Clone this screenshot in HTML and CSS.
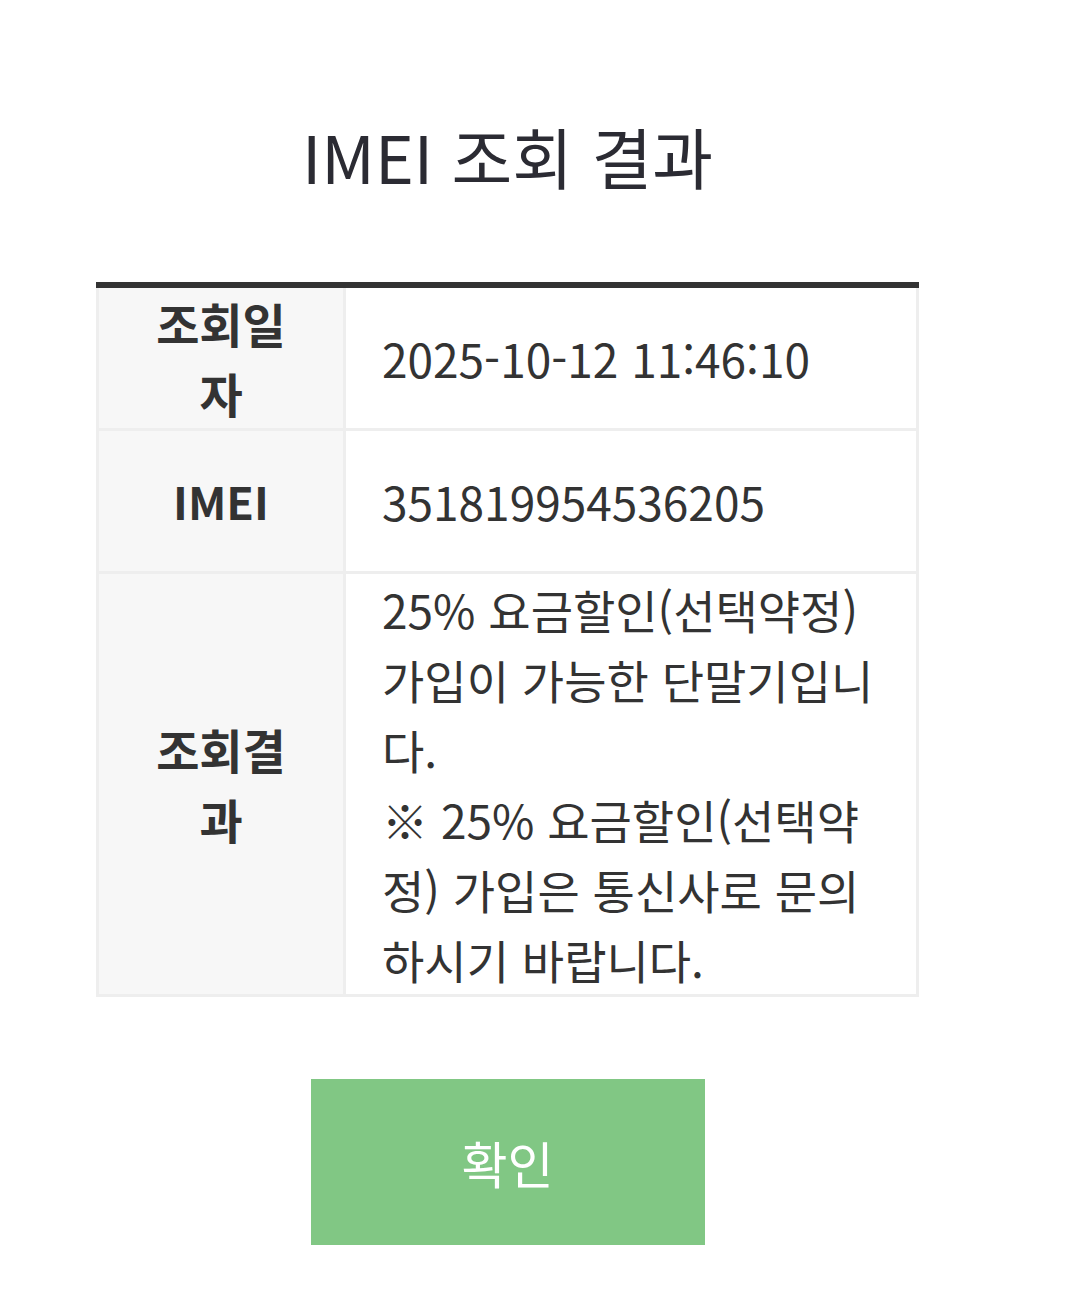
FILE: index.html
```html
<!DOCTYPE html>
<html lang="ko">
<head>
    <meta charset="UTF-8">
    <title>IMEI 조회 결과</title>
    <meta name="viewport" content="width=device-width, initial-scale=1.0">
    <link rel="stylesheet" href="styles.css">
</head>
<body>
    <div class="page">
        <h1 class="title">IMEI 조회 결과</h1>
        <table class="result-table">
            <colgroup>
                <col class="col-head">
                <col>
            </colgroup>
            <tr>
                <th>조회일자</th>
                <td>2025-10-12 11:46:10</td>
            </tr>
            <tr>
                <th class="en">IMEI</th>
                <td>351819954536205</td>
            </tr>
            <tr>
                <th>조회결과</th>
                <td>25% 요금할인(선택약정) 가입이 가능한 단말기입니다.<br>※ 25% 요금할인(선택약정) 가입은 통신사로 문의하시기 바랍니다.</td>
            </tr>
        </table>
        <div class="actions">
            <button type="button" class="btn-ok">확인</button>
        </div>
    </div>
</body>
</html>
```

FILE: styles.css
```css
body {
    margin: 0;
    background: #fff;
    font-family: "Noto Sans CJK KR", "Noto Sans", sans-serif;
    color: #333;
}
.page {
    width: 1015px;
    padding-top: 110px;
}
.title {
    margin: 0;
    text-align: center;
    font-weight: 400;
    font-size: 66px;
    line-height: 90px;
    color: #2b2b33;
}
.result-table {
    width: 823px;
    margin: 82px auto 0 auto;
    border-collapse: collapse;
    table-layout: fixed;
    border-top: 6px solid #333;
}
.col-head {
    width: 247px;
}
.result-table th,
.result-table td {
    border: 3px solid #eee;
    height: 140px;
    padding: 0;
    line-height: 70px;
    vertical-align: middle;
}
.result-table th {
    background: #f7f7f7;
    font-size: 47px;
    font-weight: 700;
    padding: 0 40px;
    text-align: center;
}
.result-table th.en {
    font-size: 45px;
}
.result-table td {
    background: #fff;
    font-size: 46px;
    padding: 0 30px 0 36px;
    text-align: left;
}
.actions {
    margin-top: 82px;
    display: flex;
    justify-content: center;
}
.btn-ok {
    width: 394px;
    height: 166px;
    border: none;
    background: #81c784;
    color: #fff;
    font-family: inherit;
    font-size: 50px;
    cursor: pointer;
}
```
